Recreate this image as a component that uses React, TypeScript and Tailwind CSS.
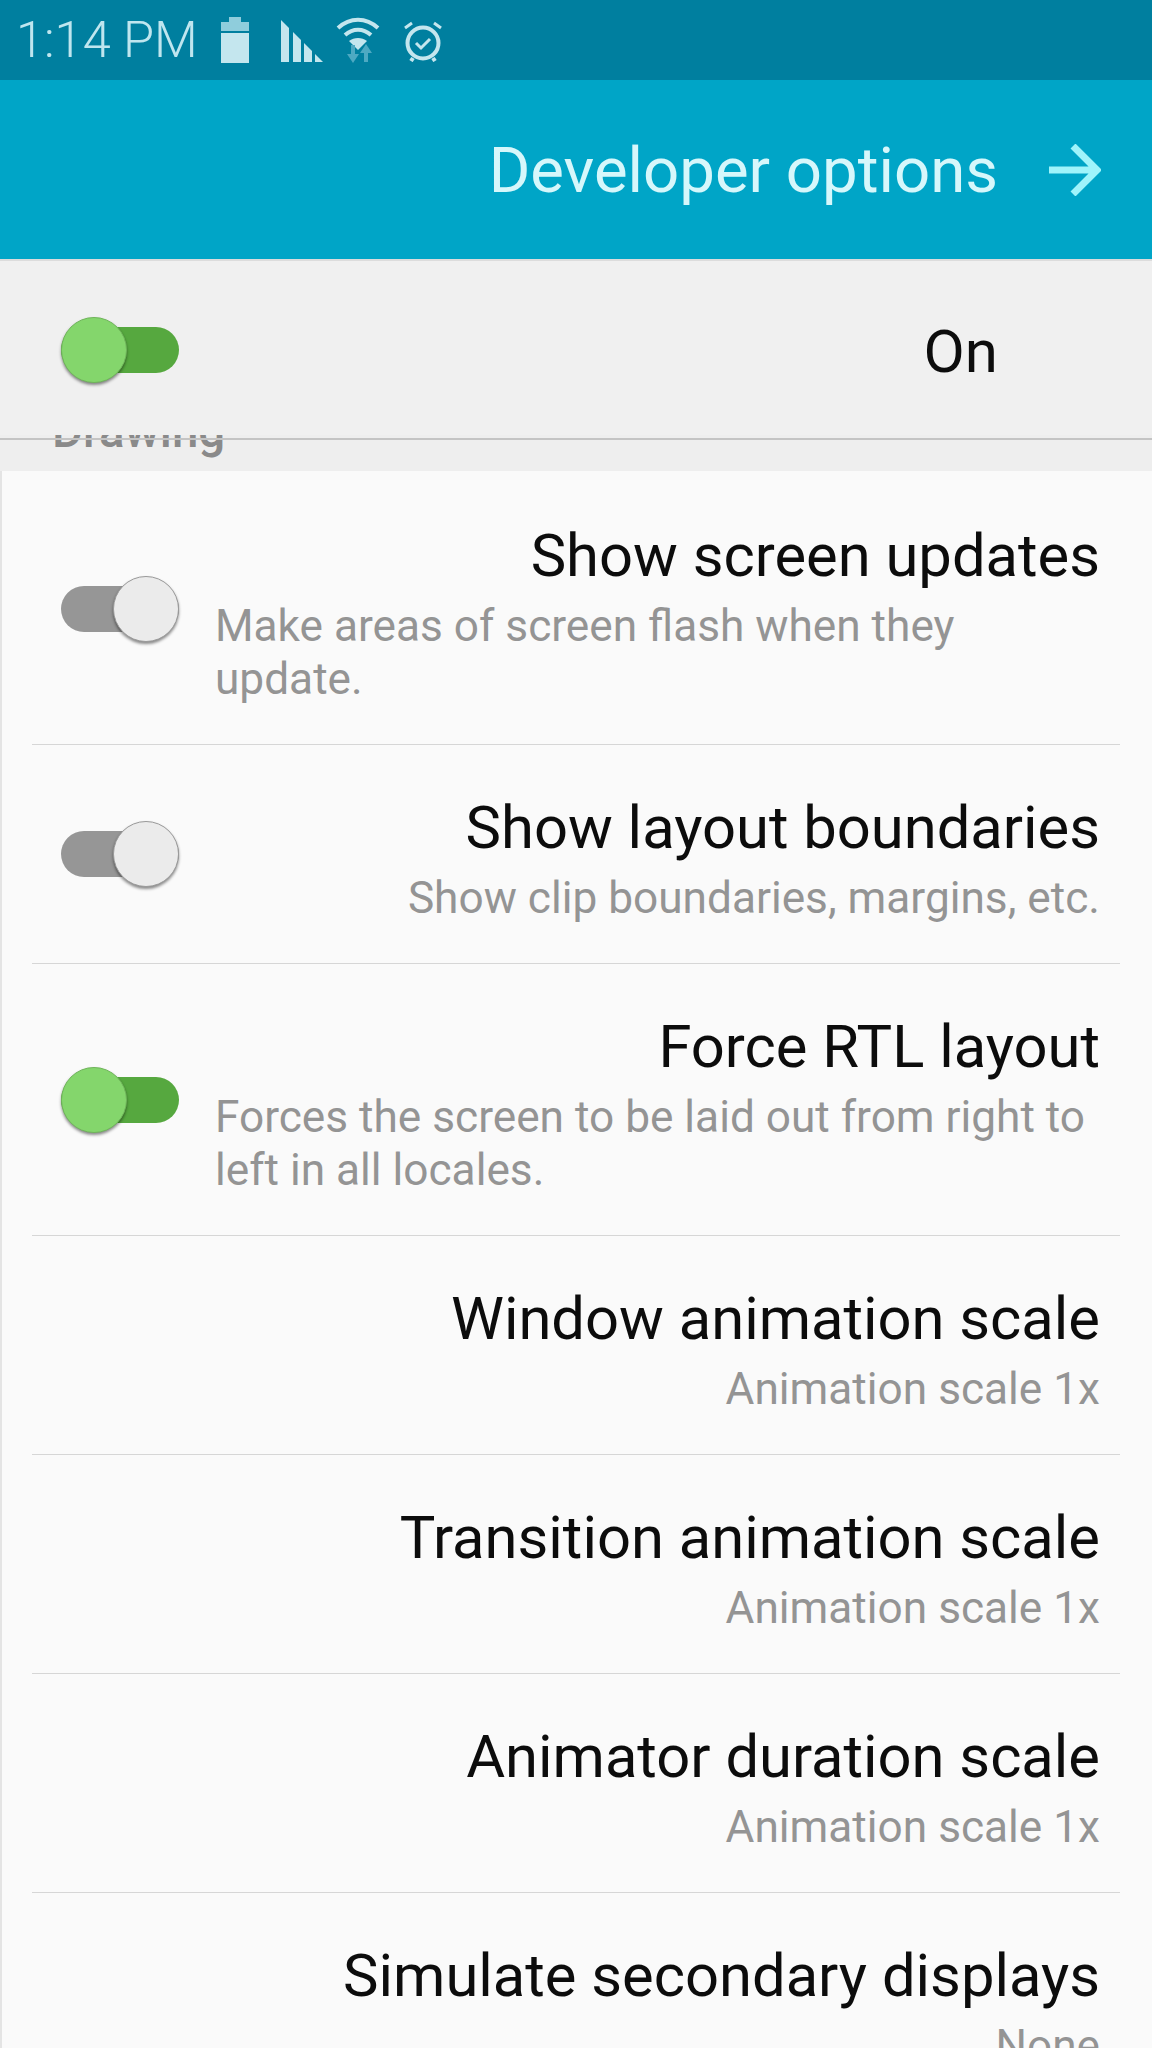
const font = { fontFamily: "Roboto, sans-serif" };

function Toggle({ on }: { on: boolean }) {
  return (
    <div className="relative h-[68px] w-[118px] shrink-0 flex items-center">
      <div className={on ? "h-[46px] w-full rounded-full bg-[#56a83f]" : "h-[46px] w-full rounded-full bg-[#969696]"} />
      <div
        className={
          on
            ? "absolute left-0 top-px h-[66px] w-[66px] rounded-full bg-[#84d66c] border border-[#6fb55a] shadow-[0_2px_3px_rgba(0,0,0,0.45)]"
            : "absolute right-0 top-px h-[66px] w-[66px] rounded-full bg-[#ebebeb] border border-[#9a9a9a] shadow-[0_2px_3px_rgba(0,0,0,0.45)]"
        }
      />
    </div>
  );
}

function Row({ title, sub, toggle }: { title: string; sub: string; toggle?: "on" | "off" }) {
  return (
    <div className="ml-[30px] mr-[32px] flex items-center border-b-[1.5px] border-[#d6d6d6]">
      <div className="ml-[29px] w-[118px] shrink-0">{toggle ? <Toggle on={toggle === "on"} /> : null}</div>
      <div className="ml-[36px] mr-[20px] flex min-w-0 flex-1 flex-col pt-[53px] pb-[38px]">
        <div className="text-right text-[59.7px] leading-[60px] text-[#0c0c0c]">{title}</div>
        <div className="ml-auto mt-[14px] w-fit text-[44.2px] leading-[53px] text-[#949494]">{sub}</div>
      </div>
    </div>
  );
}

function StatusIcons() {
  return (
    <div className="flex items-center">
      <svg width="30" height="46" viewBox="0 0 30 46" className="ml-[22px] mt-[-1px]">
        <path d="M9 0h12v5h8v9H1V5h8z" fill="#8fcddc" />
        <path d="M1 16h28v30H1z" fill="#c4e6ee" />
      </svg>
      <svg width="42" height="42" viewBox="0 0 42 42" className="ml-[31px] mt-[2px]">
        <path d="M0 0l8 8v34H0zM12 12l8 8v22h-8zM23 23l8 8v11h-8zM34 34l8 8h-8z" fill="#c4e6ee" />
      </svg>
      <svg width="44" height="46" viewBox="0 0 44 46" className="ml-[13px]" fill="none">
        <path d="M2 11c12-11 28-11 40 0M9 18c8-7 18-7 26 0" stroke="#c4e6ee" strokeWidth="4" />
        <path d="M13 24c5-4 13-4 18 0l-9 9z" fill="#c4e6ee" />
        <path d="M17 28v10" stroke="#4da9c2" strokeWidth="4" />
        <path d="M11 37h12l-6 9z" fill="#4da9c2" />
        <path d="M30 35v10" stroke="#4da9c2" strokeWidth="4" />
        <path d="M24 36h12l-6-9z" fill="#4da9c2" />
      </svg>
      <svg width="38" height="42" viewBox="0 0 38 42" className="ml-[24px] mt-[2px]" fill="none" stroke="#c4e6ee">
        <circle cx="19" cy="23" r="15.5" strokeWidth="4" />
        <path d="M1 8l7-5M37 8l-7-5" strokeWidth="3" />
        <path d="M12 23l5 5 9-9" strokeWidth="3" />
        <path d="M9 38l-2 3M29 38l2 3" strokeWidth="4" />
      </svg>
    </div>
  );
}

export default function App() {
  return (
    <div className="flex h-[2048px] w-[1152px] flex-col overflow-hidden bg-[#fafafa]" style={font}>
      <div className="flex h-[80px] shrink-0 items-center bg-[#007f9f] pl-[16px]">
        <span className="text-[50.5px] font-light leading-none text-[#bfe6ef]">1:14 PM</span>
        <StatusIcons />
      </div>
      <div className="flex h-[179px] shrink-0 items-center justify-end bg-[#00a5c7] pr-[51px]">
        <span className="pt-[3px] text-[63.5px] leading-none text-[#d6f7fb]">Developer options</span>
        <svg width="52" height="52" viewBox="0 0 52 52" fill="none" stroke="#9ff4fb" strokeWidth="7" className="ml-[51px]">
          <path d="M0 26h49M24 2l24 24-24 24" />
        </svg>
      </div>
      <div className="flex h-[176px] shrink-0 items-center justify-between border-t-2 border-t-[#dcdcdc] bg-[#f0f0f0] pl-[61px] pr-[154px] pt-[3px]">
        <Toggle on />
        <span className="pt-[4px] text-[60px] leading-none text-[#0c0c0c]">On</span>
      </div>
      <div className="relative h-[36px] shrink-0 overflow-hidden bg-[#eeeeee] pl-[52px]">
        <div className="mt-[-29px] text-[47.5px] font-medium leading-[50px] text-[#8a8a8a]">Drawing</div>
        <div className="absolute inset-x-0 top-[3px] h-[2px] bg-[#c4c4c4]" />
      </div>
      <div className="flex flex-col border-l-2 border-[#e4e4e4] pt-[2px]">
        <Row title="Show screen updates" sub="Make areas of screen flash when they update." toggle="off" />
        <Row title="Show layout boundaries" sub="Show clip boundaries, margins, etc." toggle="off" />
        <Row title="Force RTL layout" sub="Forces the screen to be laid out from right to left in all locales." toggle="on" />
        <Row title="Window animation scale" sub="Animation scale 1x" />
        <Row title="Transition animation scale" sub="Animation scale 1x" />
        <Row title="Animator duration scale" sub="Animation scale 1x" />
        <Row title="Simulate secondary displays" sub="None" />
      </div>
    </div>
  );
}
